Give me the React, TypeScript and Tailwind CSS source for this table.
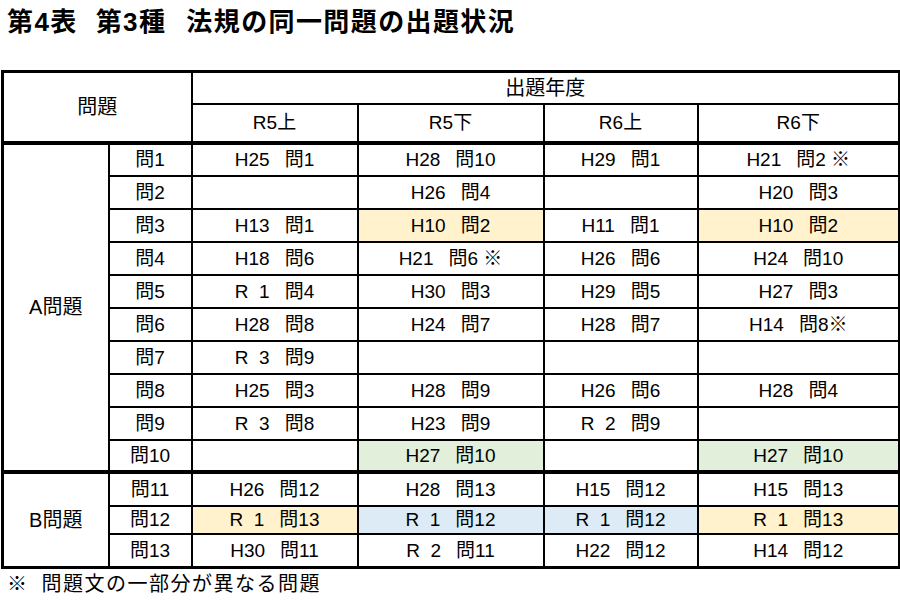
import React from "react";

type Entry = [string, string] | null;
type Tint = "y" | "g" | "b" | "";

interface Row {
  label: string;
  cells: { v: Entry; tint?: Tint }[];
  h: string;
}

const rowsA: Row[] = [
  { label: "問1", h: "h-[33px]", cells: [{ v: ["H25", "問1"] }, { v: ["H28", "問10"] }, { v: ["H29", "問1"] }, { v: ["H21", "問2 ※"] }] },
  { label: "問2", h: "h-[33px]", cells: [{ v: null }, { v: ["H26", "問4"] }, { v: null }, { v: ["H20", "問3"] }] },
  { label: "問3", h: "h-[33px]", cells: [{ v: ["H13", "問1"] }, { v: ["H10", "問2"], tint: "y" }, { v: ["H11", "問1"] }, { v: ["H10", "問2"], tint: "y" }] },
  { label: "問4", h: "h-[33px]", cells: [{ v: ["H18", "問6"] }, { v: ["H21", "問6 ※"] }, { v: ["H26", "問6"] }, { v: ["H24", "問10"] }] },
  { label: "問5", h: "h-[33px]", cells: [{ v: ["R  1", "問4"] }, { v: ["H30", "問3"] }, { v: ["H29", "問5"] }, { v: ["H27", "問3"] }] },
  { label: "問6", h: "h-[33px]", cells: [{ v: ["H28", "問8"] }, { v: ["H24", "問7"] }, { v: ["H28", "問7"] }, { v: ["H14", "問8※"] }] },
  { label: "問7", h: "h-[33px]", cells: [{ v: ["R  3", "問9"] }, { v: null }, { v: null }, { v: null }] },
  { label: "問8", h: "h-[33px]", cells: [{ v: ["H25", "問3"] }, { v: ["H28", "問9"] }, { v: ["H26", "問6"] }, { v: ["H28", "問4"] }] },
  { label: "問9", h: "h-[33px]", cells: [{ v: ["R  3", "問8"] }, { v: ["H23", "問9"] }, { v: ["R  2", "問9"] }, { v: null }] },
  { label: "問10", h: "h-[32px]", cells: [{ v: null }, { v: ["H27", "問10"], tint: "g" }, { v: null }, { v: ["H27", "問10"], tint: "g" }] },
];

const rowsB: Row[] = [
  { label: "問11", h: "h-[34px]", cells: [{ v: ["H26", "問12"] }, { v: ["H28", "問13"] }, { v: ["H15", "問12"] }, { v: ["H15", "問13"] }] },
  { label: "問12", h: "h-[28px]", cells: [{ v: ["R  1", "問13"], tint: "y" }, { v: ["R  1", "問12"], tint: "b" }, { v: ["R  1", "問12"], tint: "b" }, { v: ["R  1", "問13"], tint: "y" }] },
  { label: "問13", h: "h-[34px]", cells: [{ v: ["H30", "問11"] }, { v: ["R  2", "問11"] }, { v: ["H22", "問12"] }, { v: ["H14", "問12"] }] },
];

const tintClass = (t?: Tint) =>
  t === "y" ? "bg-[#fff2cc]" : t === "g" ? "bg-[#e2efda]" : t === "b" ? "bg-[#ddebf7]" : "bg-white";

const Value: React.FC<{ v: Entry }> = ({ v }) => {
  if (!v) return null;
  return (
    <span className="inline-flex items-baseline gap-[15px] whitespace-pre">
      <span>{v[0]}</span>
      <span>{v[1]}</span>
    </span>
  );
};

const cell = "border-2 border-black p-0 text-center align-middle";

const Section: React.FC<{ name: string; rows: Row[]; last?: boolean }> = ({ name, rows, last }) => (
  <>
    {rows.map((r, i) => {
      const bottom = !last && i === rows.length - 1 ? "border-b-4" : "";
      return (
        <tr key={r.label} className={r.h}>
          {i === 0 && (
            <td rowSpan={rows.length} className={`${cell} ${last ? "" : "border-b-4"} text-[20px]`}>
              {name}
            </td>
          )}
          <td className={`${cell} ${bottom}`}>{r.label}</td>
          {r.cells.map((c, j) => (
            <td key={j} className={`${cell} ${bottom} ${tintClass(c.tint)}`}>
              <Value v={c.v} />
            </td>
          ))}
        </tr>
      );
    })}
  </>
);

export default function App() {
  return (
    <div className="w-[900px] h-[600px] bg-white text-black overflow-hidden font-['Liberation_Sans','Noto_Sans_CJK_JP',sans-serif]">
      {/* Title */}
      <div className="h-[44px] flex items-center pl-[7px] text-[26px] font-bold tracking-[1.4px] leading-none">
        <span>第4表</span>
        <span className="ml-[18px]">第3種</span>
        <span className="ml-[20px]">法規の同一問題の出題状況</span>
      </div>

      <div className="mt-[26px] pl-[1px]">
        <table className="border-collapse table-fixed w-[897px] border-[3px] border-black text-[19px] leading-none">
          <colgroup>
            <col className="w-[106px]" />
            <col className="w-[83px]" />
            <col className="w-[166px]" />
            <col className="w-[186px]" />
            <col className="w-[154px]" />
            <col className="w-[202px]" />
          </colgroup>
          <tbody>
            <tr className="h-[32px]">
              <td rowSpan={2} colSpan={2} className={`${cell} border-b-4 text-[20px]`}>
                問題
              </td>
              <td colSpan={4} className={`${cell} text-[20px]`}>
                出題年度
              </td>
            </tr>
            <tr className="h-[39px]">
              {["R5上", "R5下", "R6上", "R6下"].map((h) => (
                <td key={h} className={`${cell} border-b-4`}>
                  {h}
                </td>
              ))}
            </tr>
            <Section name="A問題" rows={rowsA} />
            <Section name="B問題" rows={rowsB} last />
          </tbody>
        </table>
      </div>

      {/* Footnote */}
      <div className="mt-[5px] pl-[7px] flex items-center text-[20px] leading-none tracking-[1.5px]">
        <span>※</span>
        <span className="ml-[13px]">問題文の一部分が異なる問題</span>
      </div>
    </div>
  );
}
